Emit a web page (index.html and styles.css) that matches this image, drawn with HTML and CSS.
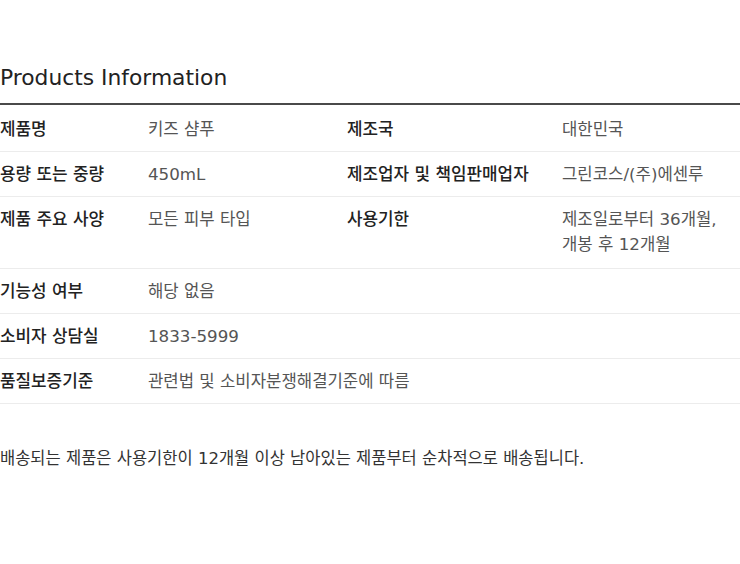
FILE: index.html
```html
<!DOCTYPE html>
<html lang="ko">
<head>
<meta charset="utf-8">
<link rel="stylesheet" href="styles.css">
</head>
<body>
<section class="info">
  <h2 class="title">Products Information</h2>
  <table class="spec">
    <colgroup>
      <col class="c1"><col class="c2"><col class="c3"><col class="c4">
    </colgroup>
    <tr>
      <th>제품명</th><td>키즈 샴푸</td>
      <th>제조국</th><td>대한민국</td>
    </tr>
    <tr>
      <th>용량 또는 중량</th><td>450mL</td>
      <th>제조업자 및 책임판매업자</th><td>그린코스/(주)에센루</td>
    </tr>
    <tr class="tall">
      <th>제품 주요 사양</th><td>모든 피부 타입</td>
      <th>사용기한</th><td>제조일로부터 36개월,<br>개봉 후 12개월</td>
    </tr>
    <tr>
      <th>기능성 여부</th><td colspan="3">해당 없음</td>
    </tr>
    <tr>
      <th>소비자 상담실</th><td colspan="3">1833-5999</td>
    </tr>
    <tr>
      <th>품질보증기준</th><td colspan="3">관련법 및 소비자분쟁해결기준에 따름</td>
    </tr>
  </table>
  <p class="note">배송되는 제품은 사용기한이 12개월 이상 남아있는 제품부터 순차적으로 배송됩니다.</p>
</section>
</body>
</html>
```

FILE: styles.css
```css
html, body {
  margin: 0;
  padding: 0;
  background: #fff;
}
body {
  font-family: "DejaVu Sans", "Noto Sans CJK KR", sans-serif;
  color: #222;
  width: 740px;
}
.title {
  margin: 63px 0 0;
  font-family: "DejaVu Sans", "Noto Sans CJK KR", sans-serif;
  font-weight: 400;
  font-size: 21.8px;
  line-height: 30px;
  color: #222;
  padding-bottom: 10px;
  border-bottom: 2px solid #4a4a4a;
}
.spec {
  width: 740px;
  border-collapse: collapse;
  table-layout: fixed;
}
.c1 { width: 148px; }
.c2 { width: 199px; }
.c3 { width: 215px; }
.c4 { width: 178px; }
.spec th, .spec td {
  text-align: left;
  vertical-align: top;
  padding: 10px 0 9px;
  line-height: 25px;
  border-bottom: 1px solid #ececec;
}
.spec th {
  font-size: 16.9px;
  font-weight: 500;
  color: #222;
}
.spec td {
  font-size: 16.7px;
  font-weight: 400;
  color: #555;
}
.spec tr:first-child th, .spec tr:first-child td {
  padding-top: 12px;
}
.spec tr.tall td, .spec tr.tall th {
  padding-bottom: 11px;
}
.note {
  margin: 42px 0 0;
  font-size: 16.5px;
  line-height: 25px;
  color: #333;
}
```
